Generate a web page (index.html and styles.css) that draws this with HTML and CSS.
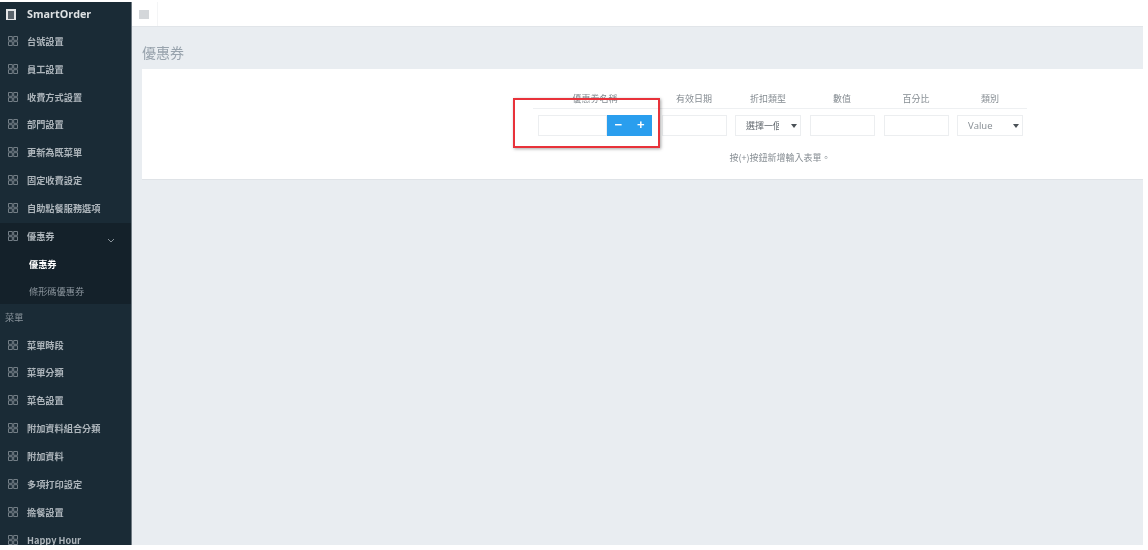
FILE: index.html
```html
<!DOCTYPE html>
<html lang="zh-Hant">
<head>
<meta charset="utf-8">
<title>SmartOrder</title>
<link rel="stylesheet" href="styles.css">
</head>
<body>
<svg class="defs" width="0" height="0" aria-hidden="true">
  <symbol id="grid" viewBox="0 0 10 10">
    <path d="M.5.5h3.8v3.8H.5zM5.7.5h3.8v3.8H5.7zM.5 5.7h3.8v3.8H.5zM5.7 5.7h3.8v3.8H5.7z" fill="none" stroke="currentColor" stroke-width="1"/>
  </symbol>
</svg>
<div class="app">
  <aside class="sidebar">
    <div class="brand">
      <span class="brand-icon"><span></span></span>
      <span class="brand-name">SmartOrder</span>
    </div>
    <nav class="nav">
      <a class="item"><svg class="ico"><use href="#grid"/></svg>台號設置</a>
      <a class="item"><svg class="ico"><use href="#grid"/></svg>員工設置</a>
      <a class="item"><svg class="ico"><use href="#grid"/></svg>收費方式設置</a>
      <a class="item"><svg class="ico"><use href="#grid"/></svg>部門設置</a>
      <a class="item"><svg class="ico"><use href="#grid"/></svg>更新為既菜單</a>
      <a class="item"><svg class="ico"><use href="#grid"/></svg>固定收費設定</a>
      <a class="item"><svg class="ico"><use href="#grid"/></svg>自助點餐服務選項</a>
      <div class="group">
        <a class="item"><svg class="ico"><use href="#grid"/></svg>優惠券
          <svg class="chev" viewBox="0 0 8 5"><path d="M1 1l3 3 3-3" fill="none" stroke="currentColor" stroke-width="1"/></svg>
        </a>
        <a class="sub active">優惠券</a>
        <a class="sub">條形碼優惠券</a>
      </div>
      <div class="section">菜單</div>
      <a class="item"><svg class="ico"><use href="#grid"/></svg>菜單時段</a>
      <a class="item"><svg class="ico"><use href="#grid"/></svg>菜單分類</a>
      <a class="item"><svg class="ico"><use href="#grid"/></svg>菜色設置</a>
      <a class="item"><svg class="ico"><use href="#grid"/></svg>附加資料組合分類</a>
      <a class="item"><svg class="ico"><use href="#grid"/></svg>附加資料</a>
      <a class="item"><svg class="ico"><use href="#grid"/></svg>多項打印設定</a>
      <a class="item"><svg class="ico"><use href="#grid"/></svg>擔餐設置</a>
      <a class="item"><svg class="ico"><use href="#grid"/></svg>Happy Hour</a>
    </nav>
  </aside>
  <main class="main">
    <header class="topbar">
      <div class="toggle"><span class="toggle-icon"></span></div>
    </header>
    <div class="content">
      <h1 class="title">優惠券</h1>
      <section class="card">
        <div class="form">
          <div class="grid">
            <div class="head">優惠券名稱</div>
            <div class="head">有效日期</div>
            <div class="head">折扣類型</div>
            <div class="head">數值</div>
            <div class="head">百分比</div>
            <div class="head">類別</div>
            <div class="cell">
              <div class="combo">
                <input class="field" type="text">
                <span class="btn">−</span>
                <span class="btn">+</span>
              </div>
            </div>
            <div class="cell"><input class="field" type="text"></div>
            <div class="cell cell-select"><div class="select"><span class="select-text">選擇一個</span></div></div>
            <div class="cell"><input class="field" type="text"></div>
            <div class="cell"><input class="field" type="text"></div>
            <div class="cell cell-select"><div class="select"><span class="select-text select-value">Value</span></div></div>
          </div>
          <p class="note">按(+)按鈕新增輸入表單。</p>
          <div class="highlight"></div>
        </div>
      </section>
    </div>
  </main>
</div>
</body>
</html>
```
FILE: styles.css
```css
* { box-sizing: border-box; }
html, body { margin: 0; height: 100%; background: #fff; overflow: hidden; }
body { font-family: "Noto Sans CJK TC", "Noto Sans", sans-serif; }
.defs { position: absolute; }

.app {
  display: flex;
  width: 1143px;
  height: 543px;
  margin-top: 2px;
  overflow: hidden;
  filter: blur(0.7px);
}

/* sidebar */
.sidebar {
  flex: 0 0 132px;
  background: #1a2b36;
  border-right: 1px solid #6f7a82;
  overflow: hidden;
  color: #adb5bb;
}
.brand {
  display: flex;
  align-items: center;
  height: 25px;
  padding-left: 6px;
  gap: 11px;
}
.brand-icon {
  width: 10px;
  height: 11px;
  background: #e4e6e8;
  display: flex;
  align-items: center;
  justify-content: center;
}
.brand-icon span { width: 6px; height: 8px; background: #5a646c; }
.brand-name {
  font: 700 10.8px/1 "Open Sans", sans-serif;
  color: #dde1e3;
}
.nav { display: flex; flex-direction: column; }
.item {
  display: flex;
  align-items: center;
  height: 27.85px;
  padding-left: 8px;
  font-size: 9.2px;
  font-weight: 700;
  position: relative;
}
.ico { width: 10px; height: 10px; margin-right: 9px; color: #737e86; flex: none; }
.chev { position: absolute; left: 107px; top: 15px; width: 8px; height: 5px; color: #89939a; }
.group { background: #14212a; height: 81.5px; margin-top: 0.7px; }
.sub {
  display: flex;
  align-items: center;
  height: 27px;
  padding-left: 29px;
  font-size: 9.2px;
  color: #8a949c;
}
.sub.active { color: #fff; font-weight: 700; }
.group .item { height: 27.5px; }
.section {
  height: 26.6px;
  display: flex;
  align-items: center;
  padding-left: 5px;
  font-size: 9.2px;
  color: #8a949c;
}

/* main column */
.main { flex: 1; display: flex; flex-direction: column; min-width: 0; background: #e9edf1; }
.topbar {
  flex: 0 0 25px;
  background: #fff;
  border-bottom: 1px solid #e1e5e9;
  display: flex;
}
.toggle {
  width: 26px;
  padding-right: 2px;
  display: flex;
  align-items: center;
  justify-content: center;
  border-right: 1px solid #f4f5f6;
}
.toggle-icon { width: 10px; height: 9px; background: #d4d7da; }
.content { flex: 1; padding: 0 0 0 10px; display: flex; flex-direction: column; }
.title {
  margin: 0;
  height: 42px;
  padding-top: 15px;
  font-size: 14px;
  line-height: 20px;
  font-weight: 400;
  color: #98a3ad;
}
.card {
  height: 111px;
  background: #fff;
  border-bottom: 1px solid #dfe3e7;
  padding: 22px 0 0 391px;
}

/* dynamic form */
.form { position: relative; width: 494px; }
.grid { display: grid; grid-template-columns: 124px repeat(5, 74px); }
.head {
  height: 18px;
  text-align: center;
  font-size: 9px;
  line-height: 16px;
  color: #858c92;
  border-bottom: 1px solid #eef0f2;
}
.cell { padding: 6px 4px 0 5px; height: 27px; }
.cell-select { padding-left: 4px; }
.field {
  display: block;
  width: 100%;
  height: 21px;
  padding: 0 4px;
  border: 1px solid #eceef0;
  background: #fff;
  outline: none;
}
.combo { display: flex; }
.combo .field { flex: 0 0 69px; width: 69px; }
.btn {
  flex: 0 0 22.5px;
  height: 21px;
  background: #2a9eee;
  color: #fff;
  font: 700 13px/20px "Liberation Sans", sans-serif;
  text-align: center;
}
.select {
  position: relative;
  height: 21px;
  border: 1px solid #eceef0;
  padding-left: 10px;
  font-size: 9px;
  line-height: 19px;
  color: #60676d;
  overflow: hidden;
}
.select::after {
  content: "";
  position: absolute;
  right: 0;
  top: 0;
  bottom: 0;
  width: 21px;
  background: #fff;
}
.select::before {
  content: "";
  position: absolute;
  z-index: 1;
  right: 3px;
  top: 8px;
  border: 3px solid transparent;
  border-top: 4px solid #4a5157;
  border-bottom: 0;
}
.select-text { white-space: nowrap; }
.select-value { font-family: "Open Sans", sans-serif; font-size: 9.5px; color: #858c92; }
.note {
  margin: 15px 0 0;
  text-align: center;
  font-size: 9px;
  line-height: 14px;
  color: #858c92;
}
.highlight {
  position: absolute;
  left: -20px;
  top: 7px;
  width: 147px;
  height: 50px;
  border: 2px solid #e8323a;
  box-shadow: 1px 1px 3px rgba(0, 0, 0, 0.35);
}
```
